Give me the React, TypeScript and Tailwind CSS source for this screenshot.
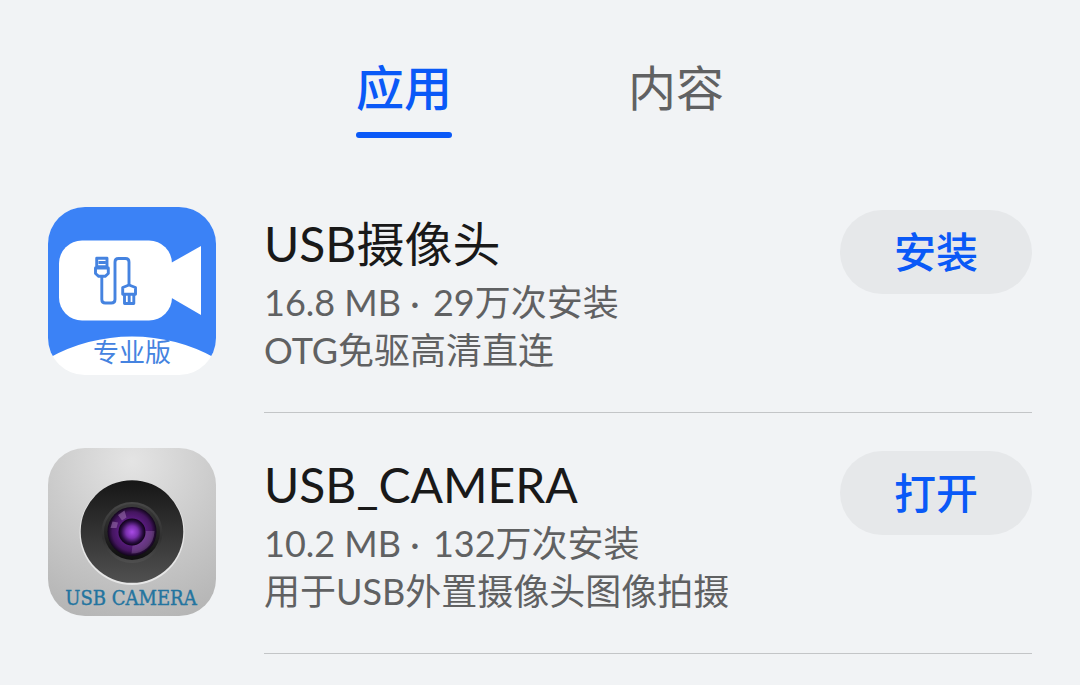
import { useState, type ReactNode } from "react";

function UsbCameraProIcon() {
  return (
    <svg viewBox="0 0 168 168" className="size-42 shrink-0" role="img" aria-label="USB摄像头">
      <defs>
        <clipPath id="pro-tile">
          <rect width="168" height="168" rx="37" />
        </clipPath>
      </defs>
      <rect width="168" height="168" rx="37" fill="#fff" />
      <path clipPath="url(#pro-tile)" d="M0 0H168V151.500A171 171 0 0 0 0 151.500Z" fill="#3b82f6" />
      <rect x="11" y="33.500" width="113" height="80" rx="23" fill="#fff" />
      <path d="M122 56.500 153 39v69l-31-18z" fill="#fff" />
      <g fill="none" stroke="#4583e0" strokeWidth="2.900" strokeLinejoin="round">
        <path d="M48.700 51.300h10.300v8.500H48.700z M50.500 55.500h7" />
        <path d="M47.500 61h12.800v5.500l-3.200 2.800h-6.400l-3.200-2.800z" />
        <path d="M53.800 69.500V92.500q0 3.500 3.500 3.500h6q3.700 0 3.700-3.500V55q0-3.500 3.500-3.500h7q3.500 0 3.500 3.500v23" />
        <path d="M74.700 80.500 81 78l6.500 2.500v6.800H74.700z" />
        <path d="M76.500 88v8.500h9.300V88 M81.200 88v8" />
      </g>
      <text x="84" y="155" textAnchor="middle" fill="#4583e0" fontSize="26" fontFamily="'Noto Sans CJK SC', sans-serif">
        专业版
      </text>
    </svg>
  );
}

function UsbCameraIcon() {
  return (
    <svg viewBox="0 0 168 168" className="size-42 shrink-0" role="img" aria-label="USB_CAMERA">
      <defs>
        <radialGradient id="metal" cx="0.5" cy="0.08" r="1">
          <stop offset="0" stopColor="#e4e4e4" />
          <stop offset="0.5" stopColor="#cbcbcb" />
          <stop offset="1" stopColor="#b4b4b4" />
        </radialGradient>
        <linearGradient id="barrel" x1="0" y1="0" x2="0" y2="1">
          <stop offset="0" stopColor="#161616" />
          <stop offset="1" stopColor="#505050" />
        </linearGradient>
        <linearGradient id="rim" x1="0" y1="0" x2="0" y2="1">
          <stop offset="0" stopColor="#484848" />
          <stop offset="0.6" stopColor="#303030" />
          <stop offset="1" stopColor="#4f4f4f" />
        </linearGradient>
        <linearGradient id="well" x1="0" y1="0" x2="0" y2="1">
          <stop offset="0" stopColor="#3c3c3c" />
          <stop offset="1" stopColor="#0e0e0e" />
        </linearGradient>
        <radialGradient id="glass">
          <stop offset="0.5" stopColor="#5a1c80" />
          <stop offset="0.8" stopColor="#44155f" />
          <stop offset="1" stopColor="#12051c" />
        </radialGradient>
        <radialGradient id="pupil">
          <stop offset="0" stopColor="#a94be6" />
          <stop offset="0.45" stopColor="#7a30ad" />
          <stop offset="0.8" stopColor="#2a0c42" />
          <stop offset="1" stopColor="#0d0314" />
        </radialGradient>
      </defs>
      <rect width="168" height="168" rx="37" fill="url(#metal)" />
      <circle cx="84" cy="84.500" r="52.500" fill="#e6e6e6" />
      <circle cx="84" cy="83.500" r="51.300" fill="url(#barrel)" />
      <circle cx="84" cy="84.500" r="30.500" fill="url(#rim)" />
      <circle cx="84" cy="84" r="28" fill="url(#well)" />
      <circle cx="84" cy="83.500" r="24.500" fill="url(#glass)" />
      <path d="M70 67 76.500 62.500 78.500 69.500 74 72.500z M64.500 73.500 70 74.500 68.500 80 62.500 80z" fill="#a67cb8" fillOpacity="0.5" />
      <path d="M97 83h9.500q-.5 11-7.500 17-6.500 5.500-15.500 5.500l1-8q11-1.500 12.500-14.500z" fill="#b48cc4" fillOpacity="0.28" />
      <circle cx="84" cy="84" r="13.500" fill="url(#pupil)" />
      <text
        x="83"
        y="157"
        textAnchor="middle"
        fill="#23749f"
        stroke="#23749f"
        strokeWidth="0.400"
        fontSize="20"
        fontFamily="'DejaVu Serif Condensed', 'DejaVu Serif', serif"
      >
        USB CAMERA
      </text>
    </svg>
  );
}

interface AppEntry {
  name: string;
  size: string;
  installs: string;
  summary: string;
  action: string;
  icon: ReactNode;
}

const apps: AppEntry[] = [
  {
    name: "USB摄像头",
    size: "16.8 MB",
    installs: "29万次安装",
    summary: "OTG免驱高清直连",
    action: "安装",
    icon: <UsbCameraProIcon />,
  },
  {
    name: "USB_CAMERA",
    size: "10.2 MB",
    installs: "132万次安装",
    summary: "用于USB外置摄像头图像拍摄",
    action: "打开",
    icon: <UsbCameraIcon />,
  },
];

const tabs = ["应用", "内容"];

export default function App() {
  const [active, setActive] = useState("应用");

  return (
    <main className="min-h-screen bg-[#f1f3f5] font-['Lato','Noto_Sans_CJK_SC',sans-serif] text-[#191919]">
      <div role="tablist" className="flex justify-center gap-44 pt-16">
        {tabs.map((tab) => (
          <button
            key={tab}
            type="button"
            role="tab"
            aria-selected={active === tab}
            onClick={() => setActive(tab)}
            className={
              active === tab
                ? "flex flex-col gap-5 text-5xl leading-12 font-medium text-[#0a59f7]"
                : "flex flex-col gap-5 text-5xl leading-12 text-[#606162]"
            }
          >
            {tab}
            <span className={active === tab ? "h-1.5 w-full rounded-full bg-[#0a59f7]" : "h-1.5 w-full"} />
          </button>
        ))}
      </div>
      <ul className="pt-[34px]">
        {apps.map((app) => (
          <li key={app.name} className="flex gap-12 px-12">
            <div className="pt-[35px]">{app.icon}</div>
            <div className="flex min-w-0 flex-1 items-start gap-6 border-b border-[#c3c5c7] pt-[38px] pb-[38px]">
              <div className="min-w-0 flex-1">
                <h2 className="text-5xl leading-[68px]">{app.name}</h2>
                <p className="text-4xl leading-12 text-[#606162]">
                  {app.size} <span className="mr-1">·</span> {app.installs}
                </p>
                <p className="text-4xl leading-12 text-[#606162]">{app.summary}</p>
              </div>
              <button
                type="button"
                className="h-21 w-48 shrink-0 rounded-full bg-[#e6e8ea] text-[42px] font-medium text-[#0a59f7]"
              >
                {app.action}
              </button>
            </div>
          </li>
        ))}
      </ul>
    </main>
  );
}
